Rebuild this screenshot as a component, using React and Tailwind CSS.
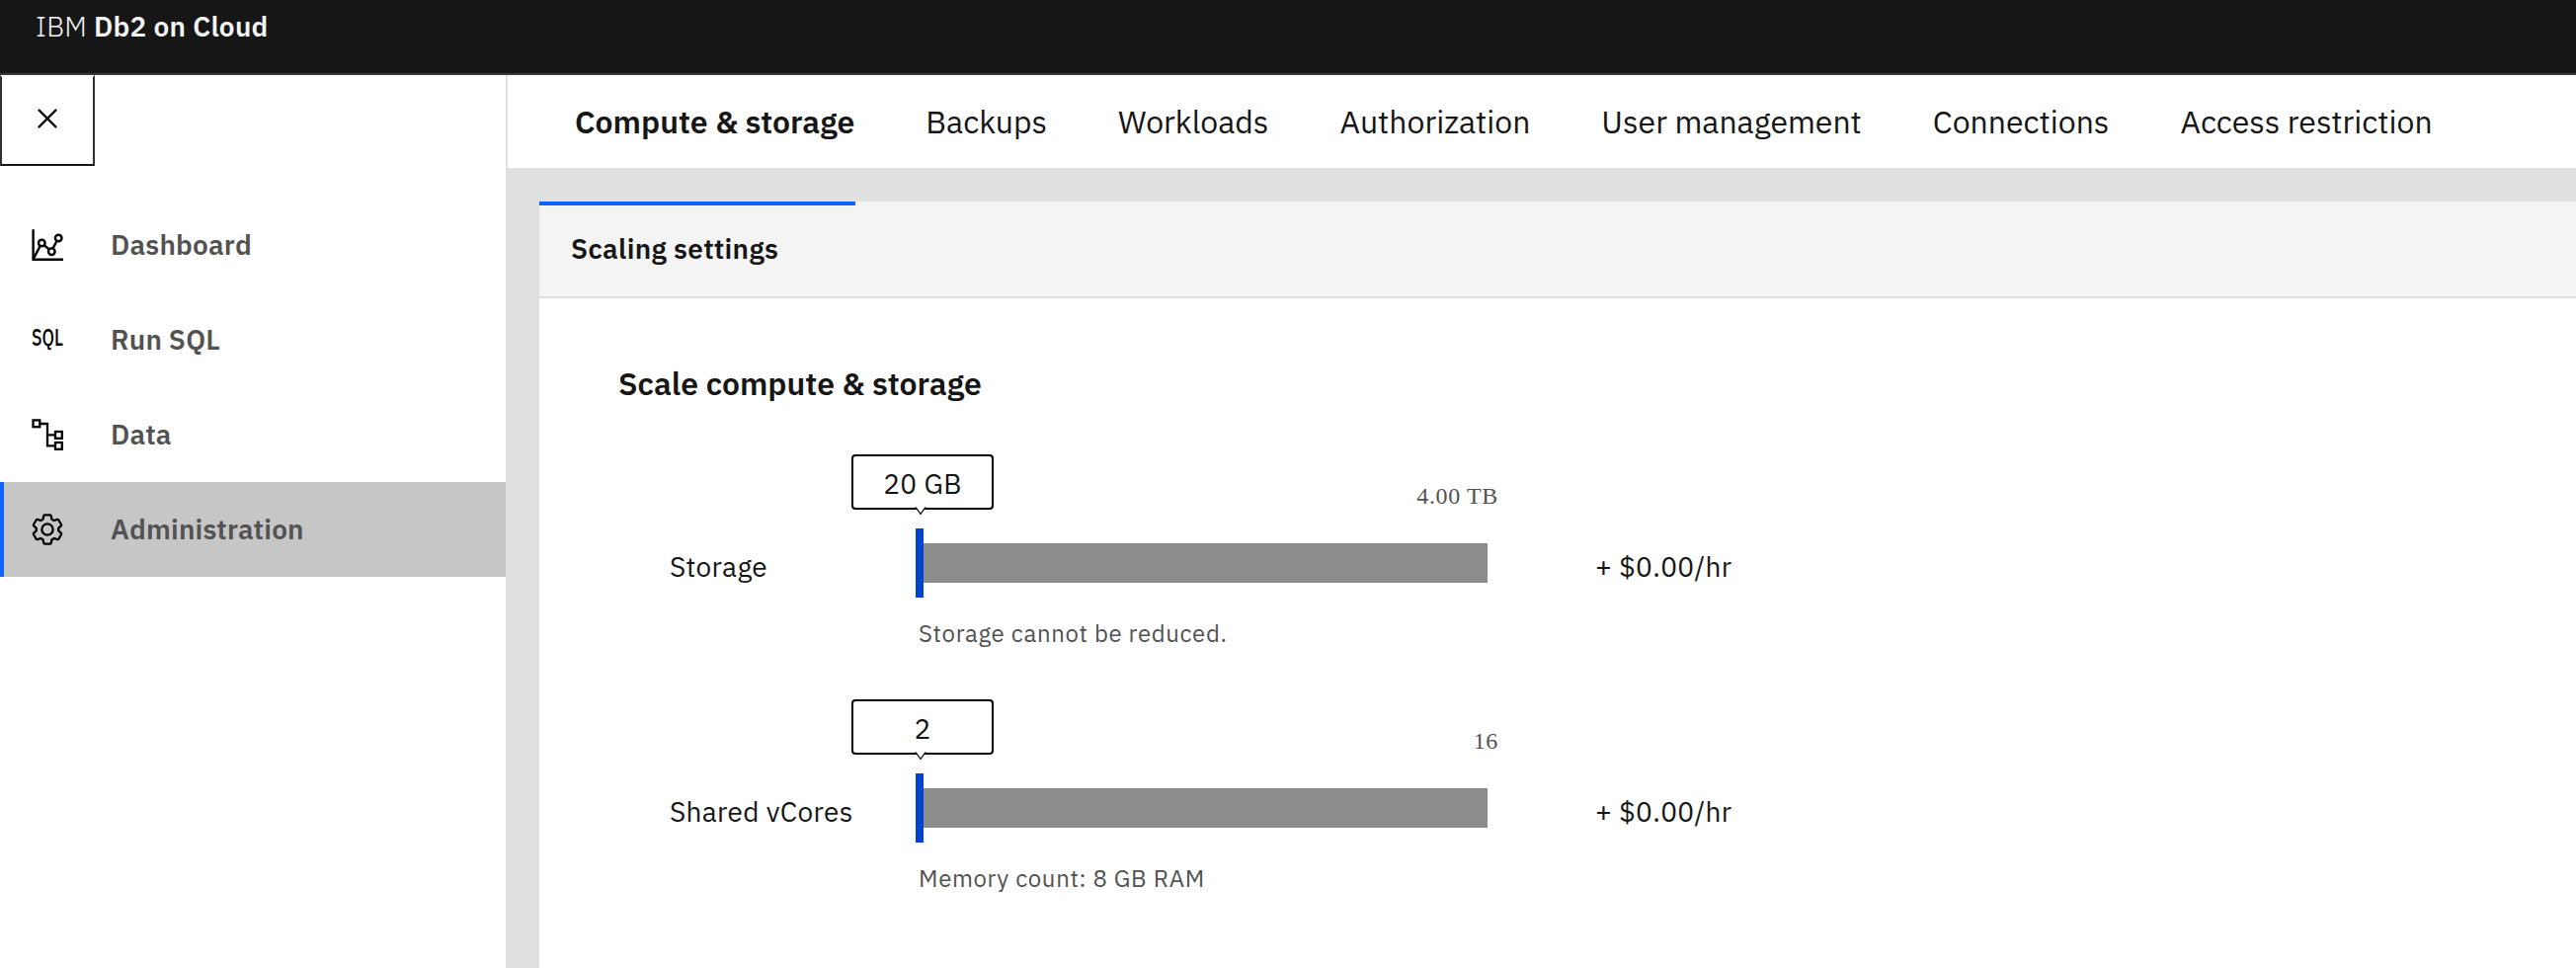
const tabs = [
  "Compute & storage",
  "Backups",
  "Workloads",
  "Authorization",
  "User management",
  "Connections",
  "Access restriction",
];

function CloseIcon() {
  return (
    <svg width="40" height="40" viewBox="0 0 32 32" fill="#161616">
      <path d="M24 9.4L22.6 8 16 14.6 9.4 8 8 9.4 14.6 16 8 22.6 9.4 24 16 17.4 22.6 24 24 22.6 17.4 16 24 9.4z" />
    </svg>
  );
}

function DashboardIcon() {
  return (
    <svg width="32" height="32" viewBox="0 0 32 32" fill="none" stroke="#000" strokeWidth="2.4">
      <path d="M1.6 0.2V30.7H32" />
      <path d="M1.6 30.4L8.6 17.2M12.9 16.5L17.6 20.2M21.6 19.4L25.4 12.2" />
      <circle cx="10.3" cy="14" r="3.3" />
      <circle cx="20.3" cy="22.7" r="3.3" />
      <circle cx="27.2" cy="9" r="3.3" />
    </svg>
  );
}

function SqlIcon() {
  return (
    <svg width="32" height="32" viewBox="0 0 32 32" className="overflow-visible">
      <text
        x="0"
        y="21.5"
        textLength="32"
        lengthAdjust="spacingAndGlyphs"
        fill="#000"
        className="font-['IBM_Plex_Sans',Roboto,sans-serif] text-[23.5px] font-medium"
      >
        SQL
      </text>
    </svg>
  );
}

function DataIcon() {
  return (
    <svg width="32" height="32" viewBox="0 0 32 32" fill="none" stroke="#000" strokeWidth="2.3">
      <rect x="1.5" y="1.4" width="6.8" height="6.8" />
      <rect x="24" y="13" width="6.8" height="6.8" />
      <rect x="24" y="24" width="6.8" height="6.8" />
      <path d="M8.3 5H16V27.3H24M16 16.3H24" />
    </svg>
  );
}

function SettingsIcon() {
  return (
    <svg width="36" height="36" viewBox="0 0 32 32" fill="#000" className="-mx-0.5">
      <path d="M27,16.76c0-.25,0-.5,0-.76s0-.51,0-.77l1.92-1.68A2,2,0,0,0,29.3,11L26.94,7a2,2,0,0,0-1.73-1,2,2,0,0,0-.64.1l-2.43.82a11.35,11.35,0,0,0-1.31-.75l-.51-2.52a2,2,0,0,0-2-1.61H13.64a2,2,0,0,0-2,1.61l-.51,2.52a11.48,11.48,0,0,0-1.32.75L7.43,6.06A2,2,0,0,0,6.79,6,2,2,0,0,0,5.06,7L2.7,11a2,2,0,0,0,.41,2.51L5,15.24c0,.25,0,.5,0,.76s0,.51,0,.77L3.11,18.45A2,2,0,0,0,2.7,21L5.06,25a2,2,0,0,0,1.73,1,2,2,0,0,0,.64-.1l2.43-.82a11.35,11.35,0,0,0,1.31.75l.51,2.52a2,2,0,0,0,2,1.61h4.72a2,2,0,0,0,2-1.61l.51-2.52a11.48,11.48,0,0,0,1.32-.75l2.42.82a2,2,0,0,0,.64.1,2,2,0,0,0,1.73-1L29.3,21a2,2,0,0,0-.41-2.51ZM25.21,24l-3.43-1.16a8.86,8.86,0,0,1-2.71,1.57L18.36,28H13.64l-.71-3.55a9.36,9.36,0,0,1-2.7-1.57L6.79,24,4.43,20l2.72-2.4a8.9,8.9,0,0,1,0-3.13L4.43,12,6.79,8l3.43,1.16a8.86,8.86,0,0,1,2.71-1.57L13.64,4h4.72l.71,3.55a9.36,9.36,0,0,1,2.7,1.57L25.21,8,27.57,12l-2.72,2.4a8.9,8.9,0,0,1,0,3.13L27.57,20Z" />
      <path d="M16,22a6,6,0,1,1,6-6A5.94,5.94,0,0,1,16,22Zm0-10a3.91,3.91,0,0,0-4,4,3.91,3.91,0,0,0,4,4,3.91,3.91,0,0,0,4-4A3.91,3.91,0,0,0,16,12Z" />
    </svg>
  );
}

const navItems = [
  { label: "Dashboard", Icon: DashboardIcon },
  { label: "Run SQL", Icon: SqlIcon },
  { label: "Data", Icon: DataIcon },
  { label: "Administration", Icon: SettingsIcon, active: true },
];

function NavItem({ label, Icon, active }) {
  return (
    <li
      className={
        active
          ? "flex h-24 items-center border-l-4 border-[#0f62fe] bg-[#c6c6c6] pl-7"
          : "flex h-24 items-center pl-8"
      }
    >
      <Icon />
      <span className="pl-12 text-[28px] font-semibold leading-9 tracking-[0.18px] text-[#525252]">
        {label}
      </span>
    </li>
  );
}

function ScaleRow({ label, value, max, helper, price }) {
  return (
    <div className="flex h-[248px] pl-[132px] text-[28px] leading-9 tracking-[0.32px]">
      <div className="w-[249px] shrink-0 pt-24">{label}</div>
      <div className="w-[579px] shrink-0">
        <div className="flex h-[75px] justify-between">
          <div className="relative -ml-[65px] flex h-14 w-36 items-center justify-center rounded border-2 border-black bg-white pt-[3px]">
            {value}
            <svg
              className="absolute -bottom-[8px] left-[63px]"
              width="10"
              height="10"
              viewBox="0 0 10 10"
            >
              <path d="M0 0H10V2L5 9L0 2Z" fill="#fff" />
              <path d="M0 1.4L5 8.4L10 1.4" fill="none" stroke="#161616" strokeWidth="1.2" />
            </svg>
          </div>
          <div className="-mr-[11px] pt-[26px] font-['Liberation_Serif',serif] text-2xl leading-8 tracking-[0.64px] text-[#525252]">
            {max}
          </div>
        </div>
        <div className="flex h-[70px] items-center">
          <div className="h-full w-2 bg-[#0043ce]" />
          <div className="h-10 grow bg-[#8d8d8d]" />
        </div>
        <div className="ml-[3px] pt-5 text-2xl leading-8 tracking-[0.64px] text-[#525252]">
          {helper}
        </div>
      </div>
      <div className="pl-[109px] pt-24">{price}</div>
    </div>
  );
}

export default function App() {
  return (
    <div className="flex h-[980px] w-full flex-col overflow-hidden bg-white font-['IBM_Plex_Sans',Roboto,sans-serif] text-[#161616]">
      <header className="h-[76px] shrink-0 border-b-2 border-[#393939] bg-[#161616] pl-9 pt-[9px] text-[28px] leading-9 tracking-[0.26px] text-[#f4f4f4]">
        <span className="font-light">IBM</span> <span className="font-semibold">Db2 on Cloud</span>
      </header>
      <div className="flex min-h-0 grow">
        <aside className="w-[514px] shrink-0 border-r-2 border-[#e0e0e0] bg-white">
          <button className="flex h-[92px] w-24 items-center justify-center border-2 border-x-[#333333] border-b-[#161616] border-t-white pb-1">
            <CloseIcon />
          </button>
          <ul className="pt-8">
            {navItems.map((item) => (
              <NavItem key={item.label} {...item} />
            ))}
          </ul>
        </aside>
        <main className="flex min-w-0 grow flex-col bg-[#e0e0e0]">
          <nav className="flex h-[94px] shrink-0 items-center gap-[72px] bg-white pl-[68px] text-[32px] tracking-[-0.01px]">
            {tabs.map((tab, i) => (
              <a
                key={tab}
                className={
                  i === 0
                    ? "overflow-hidden font-semibold leading-9"
                    : "overflow-hidden leading-9"
                }
              >
                {tab}
              </a>
            ))}
          </nav>
          <section className="ml-8 mt-[34px] grow bg-white">
            <div className="h-[98px] border-b-2 border-[#e0e0e0] bg-[#f4f4f4]">
              <div className="h-24 w-80 border-t-4 border-[#0f62fe] pl-8 pt-[26px] text-[28px] font-semibold leading-9 tracking-[0.32px]">
                Scaling settings
              </div>
            </div>
            <h2 className="pl-20 pt-[66px] text-[32px] font-semibold leading-10">
              Scale compute &amp; storage
            </h2>
            <div className="pt-[52px]">
              <ScaleRow
                label="Storage"
                value="20 GB"
                max="4.00 TB"
                helper="Storage cannot be reduced."
                price="+ $0.00/hr"
              />
              <ScaleRow
                label="Shared vCores"
                value="2"
                max="16"
                helper="Memory count: 8 GB RAM"
                price="+ $0.00/hr"
              />
            </div>
          </section>
        </main>
      </div>
    </div>
  );
}
